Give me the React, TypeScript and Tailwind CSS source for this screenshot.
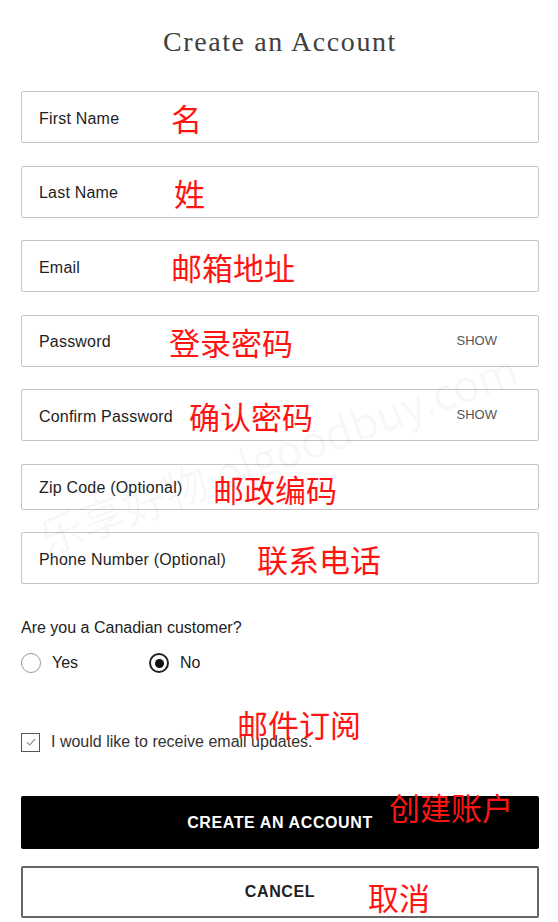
import React from "react";

const sans = { fontFamily: '"Liberation Sans", Arial, sans-serif' };

function Note({ text, left, top }: { text: string; left: number; top: number }) {
  return (
    <span
      className="pointer-events-none absolute whitespace-nowrap text-[31px] leading-[32px] text-[#ff1414]"
      style={{ left, top, fontFamily: '"Noto Sans CJK SC", sans-serif' }}
    >
      {text}
    </span>
  );
}

function Field({
  label,
  note,
  noteLeft,
  show,
  tall = true,
}: {
  label: string;
  note: string;
  noteLeft: number;
  show?: boolean;
  tall?: boolean;
}) {
  return (
    <div
      className={`relative flex items-center justify-between rounded-[2px] border border-[#c4c4c4] bg-white pl-[17px] pr-[41px] ${
        tall ? "h-[52px]" : "h-[46px]"
      }`}
    >
      <span className="pt-[3px] text-[16px] tracking-[0.2px] text-[#1e1e1e]">{label}</span>
      {show && <span className="text-[13px] text-[#555]">SHOW</span>}
      <Note text={note} left={noteLeft - 21} top={tall ? 10 : 8} />
    </div>
  );
}

export default function App() {
  return (
    <div className="relative min-h-[922px] w-full overflow-hidden bg-white pl-[21px] pr-[19px] pt-[25px]" style={sans}>
      <h1
        className="mb-[32px] text-center text-[28px] leading-[34px] tracking-[1.6px] text-[#404040]"
        style={{ fontFamily: '"Liberation Serif", "Times New Roman", serif', fontWeight: 400 }}
      >
        Create an Account
      </h1>

      <div className="flex flex-col gap-[22.5px]">
        <Field label="First Name" note="名" noteLeft={170} />
        <Field label="Last Name" note="姓" noteLeft={173} />
        <Field label="Email" note="邮箱地址" noteLeft={170} />
        <Field label="Password" note="登录密码" noteLeft={168} show />
        <Field label="Confirm Password" note="确认密码" noteLeft={188} show />
        <Field label="Zip Code (Optional)" note="邮政编码" noteLeft={212} tall={false} />
        <Field label="Phone Number (Optional)" note="联系电话" noteLeft={256} />
      </div>

      <p className="mt-[34px] text-[16px] leading-[20px] text-[#222]">Are you a Canadian customer?</p>

      <div className="mt-[15px] flex h-[20px] items-center">
        <div className="flex w-[128px] items-center gap-[11px]">
          <span className="h-[20px] w-[20px] rounded-full border border-[#999] bg-white" />
          <span className="text-[16px] text-[#222]">Yes</span>
        </div>
        <div className="flex items-center gap-[11px]">
          <span className="flex h-[20px] w-[20px] items-center justify-center rounded-full border-2 border-[#222] bg-white">
            <span className="h-[9px] w-[9px] rounded-full bg-[#111]" />
          </span>
          <span className="text-[16px] text-[#222]">No</span>
        </div>
      </div>

      <div className="relative mt-[59px] flex h-[20px] items-center gap-[11px]">
        <span className="flex h-[19px] w-[19px] items-center justify-center border-[1.5px] border-[#555] bg-white">
          <svg width="12" height="12" viewBox="0 0 12 12" fill="none">
            <path d="M2 6.5 L4.8 9 L10 3" stroke="#999" strokeWidth="1.2" />
          </svg>
        </span>
        <span className="text-[16px] text-[#333]">I would like to receive email updates.</span>
        <Note text="邮件订阅" left={216} top={-24} />
      </div>

      <button className="relative mt-[44px] flex h-[53px] w-full items-center justify-center rounded-[2px] bg-black">
        <span className="text-[16px] font-bold tracking-[0.6px] text-white">CREATE AN ACCOUNT</span>
        <Note text="创建账户" left={368} top={-5} />
      </button>

      <button className="relative mt-[17px] flex h-[52px] w-full items-center justify-center rounded-[2px] border-2 border-[#666] bg-white">
        <span className="text-[16px] font-bold tracking-[0.6px] text-[#222]">CANCEL</span>
        <Note text="取消" left={345} top={13} />
      </button>

      <div
        className="pointer-events-none absolute left-[40px] top-[505px] origin-left whitespace-nowrap text-[44px] text-black/[0.035]"
        style={{ transform: "rotate(-20deg)", fontFamily: '"Noto Sans CJK SC", "Liberation Sans", sans-serif' }}
      >
        乐享好物 olgoodbuy.com
      </div>
    </div>
  );
}
